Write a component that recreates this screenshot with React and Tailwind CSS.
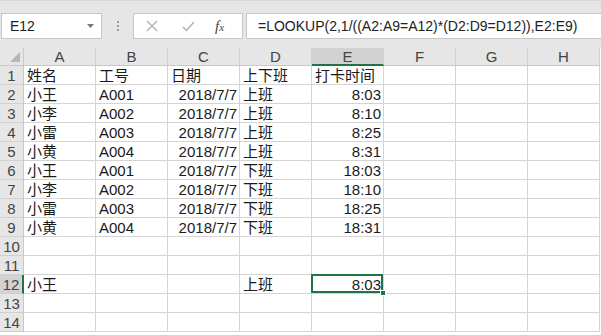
import React from "react";

const cols = ["A", "B", "C", "D", "E", "F", "G", "H"];
const data = {
  1: ["姓名", "工号", "日期", "上下班", "打卡时间"],
  2: ["小王", "A001", "2018/7/7", "上班", "8:03"],
  3: ["小李", "A002", "2018/7/7", "上班", "8:10"],
  4: ["小雷", "A003", "2018/7/7", "上班", "8:25"],
  5: ["小黄", "A004", "2018/7/7", "上班", "8:31"],
  6: ["小王", "A001", "2018/7/7", "下班", "18:03"],
  7: ["小李", "A002", "2018/7/7", "下班", "18:10"],
  8: ["小雷", "A003", "2018/7/7", "下班", "18:25"],
  9: ["小黄", "A004", "2018/7/7", "下班", "18:31"],
  12: ["小王", "", "", "上班", "8:03"],
};

const font = { fontFamily: '"Liberation Sans", "Noto Sans CJK SC", sans-serif' };

function Cell({ r, c, v }) {
  const right = r > 1 && (c === 2 || c === 4) && v !== "";
  const selected = r === 12 && c === 4;
  return (
    <div className="relative h-[19px] border-r border-b border-[#d4d4d4] overflow-visible">
      {v !== "" && (
        <div
          className={`absolute inset-0 flex items-center whitespace-nowrap text-[15px] leading-[19px] text-[#1a1a1a] ${
            right ? "justify-end pr-[2px]" : "pl-[3px]"
          }`}
        >
          {v}
        </div>
      )}
      {selected && (
        <>
          <div className="absolute -left-[1px] -top-[1px] right-0 bottom-0 border-2 border-[#217346]" />
          <div className="absolute -right-[3px] -bottom-[3px] w-[6px] h-[6px] bg-[#217346] border border-white z-10" />
        </>
      )}
    </div>
  );
}

export default function App() {
  const rows = Array.from({ length: 14 }, (_, i) => i + 1);
  return (
    <div className="w-[601px] h-[335px] overflow-hidden bg-white" style={font}>
      {/* formula bar */}
      <div className="h-[48px] bg-[#e6e6e6] flex items-start pt-[12px] border-t border-[#d8d8d8]">
        <div className="ml-[1px] w-[101px] h-[26px] bg-white border border-[#c6c6c6] flex items-center justify-between pl-[8px] pr-[6px]">
          <span className="text-[14px] text-[#222]">E12</span>
          <svg width="9" height="6" viewBox="0 0 9 6">
            <path d="M1 1h7L4.5 5z" fill="#777" />
          </svg>
        </div>
        <div className="w-[31px] h-[26px] flex flex-col items-center justify-center gap-[2px]">
          <span className="w-[2px] h-[2px] bg-[#9a9a9a]" />
          <span className="w-[2px] h-[2px] bg-[#9a9a9a]" />
          <span className="w-[2px] h-[2px] bg-[#9a9a9a]" />
        </div>
        <div className="w-[110px] h-[26px] bg-white border border-[#c6c6c6] flex items-center">
          <svg className="ml-[12px]" width="12" height="12" viewBox="0 0 12 12">
            <path d="M1 1L11 11M11 1L1 11" stroke="#b0b0b0" strokeWidth="1.3" />
          </svg>
          <svg className="ml-[24px]" width="13" height="11" viewBox="0 0 13 11">
            <path d="M1 6L4.5 9.5L12 1" stroke="#b0b0b0" strokeWidth="1.4" fill="none" />
          </svg>
          <span
            className="ml-[20px] text-[15px] italic text-[#444]"
            style={{ fontFamily: '"Liberation Serif", serif' }}
          >
            f<span className="text-[11px]">x</span>
          </span>
        </div>
        <div className="ml-[3px] flex-1 h-[26px] bg-white border border-r-0 border-[#c6c6c6] flex items-center pl-[11px]">
          <span className="text-[14px] text-[#222] whitespace-nowrap">
            =LOOKUP(2,1/((A2:A9=A12)*(D2:D9=D12)),E2:E9)
          </span>
        </div>
      </div>
      {/* grid */}
      <div className="grid grid-cols-[24px_repeat(8,72px)]">
        <div className="h-[18px] bg-[#e6e6e6] border-r border-b border-[#c8c8c8] relative">
          <svg className="absolute right-[3px] bottom-[3px]" width="10" height="10" viewBox="0 0 10 10">
            <path d="M10 0V10H0z" fill="#b5b5b5" />
          </svg>
        </div>
        {cols.map((c, i) => (
          <div
            key={c}
            className={`h-[18px] flex items-center justify-center text-[15px] leading-none text-[#444] border-r border-[#d0d0d0] ${
              i === 4 ? "bg-[#d2d2d2] border-b-2 border-b-[#217346]" : "bg-[#e6e6e6] border-b border-b-[#c8c8c8]"
            }`}
          >
            {c}
          </div>
        ))}
        {rows.map((r) => (
          <React.Fragment key={r}>
            <div
              className={`h-[19px] flex items-center justify-center text-[15px] leading-none text-[#444] border-b border-[#d0d0d0] ${
                r === 12 ? "bg-[#d2d2d2] border-r-2 border-r-[#217346]" : "bg-[#e6e6e6] border-r border-r-[#c8c8c8]"
              }`}
            >
              {r}
            </div>
            {cols.map((c, ci) => (
              <Cell key={c} r={r} c={ci} v={(data[r] && data[r][ci]) || ""} />
            ))}
          </React.Fragment>
        ))}
      </div>
    </div>
  );
}
